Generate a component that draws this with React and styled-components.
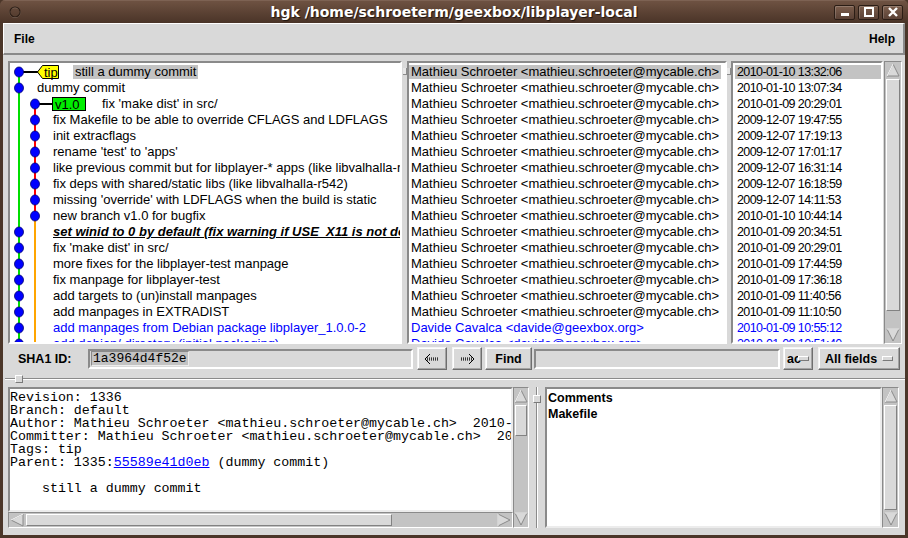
import React from 'react'
import styled, { createGlobalStyle } from 'styled-components'

const UI = '"Liberation Sans", Arial, Helvetica, sans-serif'
const MONO = '"Liberation Mono", "Courier New", monospace'

const GlobalStyle = createGlobalStyle`
  html, body {
    margin: 0;
    padding: 0;
    background: #4b3629;
  }
  body {
    width: 908px;
    height: 538px;
    overflow: hidden;
    font-family: ${UI};
  }
`

const commits = [
  { text: 'still a dummy commit', sel: true },
  { text: 'dummy commit' },
  { text: "fix 'make dist' in src/" },
  { text: 'fix Makefile to be able to override CFLAGS and LDFLAGS' },
  { text: 'init extracflags' },
  { text: "rename 'test' to 'apps'" },
  { text: 'like previous commit but for libplayer-* apps (like libvalhalla-r542)' },
  { text: 'fix deps with shared/static libs (like libvalhalla-r542)' },
  { text: "missing 'override' with LDFLAGS when the build is static" },
  { text: 'new branch v1.0 for bugfix' },
  { text: 'set winid to 0 by default (fix warning if USE_X11 is not defined)', emph: true },
  { text: "fix 'make dist' in src/" },
  { text: 'more fixes for the libplayer-test manpage' },
  { text: 'fix manpage for libplayer-test' },
  { text: 'add targets to (un)install manpages' },
  { text: 'add manpages in EXTRADIST' },
  { text: 'add manpages from Debian package libplayer_1.0.0-2', blue: true },
  { text: 'add debian/ directory (initial packaging)', blue: true },
]

const MATHIEU = 'Mathieu Schroeter <mathieu.schroeter@mycable.ch>'
const DAVIDE = 'Davide Cavalca <davide@geexbox.org>'

const dates = [
  '2010-01-10 13:32:06',
  '2010-01-10 13:07:34',
  '2010-01-09 20:29:01',
  '2009-12-07 19:47:55',
  '2009-12-07 17:19:13',
  '2009-12-07 17:01:17',
  '2009-12-07 16:31:14',
  '2009-12-07 16:18:59',
  '2009-12-07 14:11:53',
  '2010-01-10 10:44:14',
  '2010-01-09 20:34:51',
  '2010-01-09 20:29:01',
  '2010-01-09 17:44:59',
  '2010-01-09 17:36:18',
  '2010-01-09 11:40:56',
  '2010-01-09 11:10:50',
  '2010-01-09 10:55:12',
  '2010-01-09 10:51:40',
]

const GREEN_X = 9
const SIDE_X = 25

// graph cell for one row of the history list
const GraphCell = ({ i }) => {
  const width = i === 0 ? 63 : i === 1 ? 25 : i === 2 ? 90 : 41
  const dotX = i < 2 || i >= 10 ? GREEN_X : SIDE_X
  return (
    <GraphSvg width={width} height={16}>
      <line x1={GREEN_X} y1={i === 0 ? 8 : 0} x2={GREEN_X} y2={16} stroke="#00dd00" strokeWidth="2" />
      {i === 2 && <line x1={SIDE_X} y1={8} x2={SIDE_X} y2={16} stroke="#ff0000" strokeWidth="2" />}
      {i > 2 && i < 9 && <line x1={SIDE_X} y1={0} x2={SIDE_X} y2={16} stroke="#ff0000" strokeWidth="2" />}
      {i === 9 && (
        <>
          <line x1={SIDE_X} y1={0} x2={SIDE_X} y2={8} stroke="#ff0000" strokeWidth="2" />
          <line x1={SIDE_X} y1={8} x2={SIDE_X} y2={16} stroke="#ffa500" strokeWidth="2" />
        </>
      )}
      {i >= 10 && <line x1={SIDE_X} y1={0} x2={SIDE_X} y2={16} stroke="#ffa500" strokeWidth="2" />}
      {i === 0 && (
        <>
          <line x1={GREEN_X} y1={8} x2={28} y2={8} stroke="#000" strokeWidth="2" />
          <polygon points="27.5,8 32.5,1.5 48.5,1.5 48.5,14.5 32.5,14.5" fill="#ffff00" stroke="#000" />
          <text x="34" y="12.5" fontFamily={UI} fontSize="13" fill="#000">tip</text>
        </>
      )}
      {i === 2 && (
        <>
          <line x1={SIDE_X} y1={8} x2={42} y2={8} stroke="#000" strokeWidth="2" />
          <rect x="42.5" y="1.5" width="33" height="13" fill="#00ee00" stroke="#000" />
          <text x="45" y="12.5" fontFamily={UI} fontSize="13" fill="#000">v1.0</text>
        </>
      )}
      <ellipse cx={dotX} cy={8} rx="4.5" ry="5" fill="#0000ff" stroke="#000070" strokeWidth="0.8" />
    </GraphSvg>
  )
}

const ScrollArrow = ({ dir }) => {
  const pts = {
    up: ['8,2 14,14 2,14', '2,14 8,2'],
    down: ['2,2 14,2 8,14', '2,2 14,2'],
    left: ['2,8 14,2 14,14', '14,2 2,8'],
    right: ['2,2 14,8 2,14', '2,14 2,2'],
  }[dir]
  return (
    <ArrowSvg width="16" height="16" viewBox="0 0 16 16">
      <polygon points={pts[0]} fill="#d9d9d9" stroke="#8a8a8a" strokeWidth="1" />
      <polyline points={pts[1]} fill="none" stroke="#ffffff" strokeWidth="1" />
    </ArrowSvg>
  )
}

const Scrollbar = ({ vertical, before, size, after }) => (
  <Track $vertical={vertical}>
    <ScrollArrow dir={vertical ? 'up' : 'left'} />
    <Trough $vertical={vertical}>
      <div style={{ flex: before }} />
      <Thumb style={{ flex: size }} />
      <div style={{ flex: after }} />
    </Trough>
    <ScrollArrow dir={vertical ? 'down' : 'right'} />
  </Track>
)

const NavArrow = ({ back }) => (
  <svg width="18" height="12" viewBox="0 0 18 12">
    <g transform={back ? '' : 'translate(18,0) scale(-1,1)'}>
      <polyline points="7,1 2,6 7,11" fill="none" stroke="#000" strokeWidth="1" />
      <line x1="4" y1="5" x2="16" y2="5" stroke="#000" strokeDasharray="1 1" />
      <line x1="3" y1="6" x2="16" y2="6" stroke="#000" strokeDasharray="1 1" strokeDashoffset="1" />
      <line x1="4" y1="7" x2="16" y2="7" stroke="#000" strokeDasharray="1 1" />
    </g>
  </svg>
)

const detail = [
  'Revision: 1336',
  'Branch: default',
  'Author: Mathieu Schroeter <mathieu.schroeter@mycable.ch>  2010-01-10 13:32:06',
  'Committer: Mathieu Schroeter <mathieu.schroeter@mycable.ch>  2010-01-10 13:32:06',
  'Tags: tip',
]

export default function App() {
  return (
    <>
      <GlobalStyle />
      <Window>
        <TitleBar>
          <TitleLeft>
            <svg width="16" height="16" viewBox="0 0 16 16">
              <circle cx="8" cy="8.6" r="5" fill="none" stroke="#8f7a6d" strokeWidth="1" />
              <circle cx="8" cy="8" r="5" fill="none" stroke="#2c1e16" strokeWidth="1.2" />
            </svg>
          </TitleLeft>
          <TitleText>hgk /home/schroeterm/geexbox/libplayer-local</TitleText>
          <TitleRight>
            <WinButton>
              <svg width="12" height="10"><rect x="2" y="6" width="8" height="3" fill="#fff" /></svg>
            </WinButton>
            <WinButton>
              <svg width="12" height="10"><rect x="2" y="1" width="8" height="8" fill="none" stroke="#fff" strokeWidth="2" /></svg>
            </WinButton>
            <WinButton>
              <svg width="12" height="10">
                <path d="M2 1 L10 9 M10 1 L2 9" stroke="#fff" strokeWidth="2.4" />
              </svg>
            </WinButton>
          </TitleRight>
        </TitleBar>

        <Body>
          <MenuBar>
            <MenuItem>File</MenuItem>
            <MenuItem>Help</MenuItem>
          </MenuBar>

          <TopPanes>
            <ListBox $w={394}>
              {commits.map((c, i) => (
                <ListRow key={i}>
                  <GraphCell i={i} />
                  <Cell $sel={c.sel} $blue={c.blue} $emph={c.emph}>{c.text}</Cell>
                </ListRow>
              ))}
            </ListBox>
            <VSash $w={5}><SashGrip /></VSash>
            <ListBox $w={320}>
              {commits.map((c, i) => (
                <ListRow key={i}>
                  <Cell $sel={i === 0} $blue={c.blue}>{c.blue ? DAVIDE : MATHIEU}</Cell>
                </ListRow>
              ))}
            </ListBox>
            <VSash $w={4}><SashGrip /></VSash>
            <ListBox $w={152}>
              {dates.map((d, i) => (
                <ListRow key={i}>
                  <DateCell $sel={i === 0} $blue={commits[i].blue}>{d}</DateCell>
                </ListRow>
              ))}
            </ListBox>
            <ScrollSlot $w={18} $h={283} $ml={1}>
              <Scrollbar vertical before={0} size={94} after={6} />
            </ScrollSlot>
          </TopPanes>

          <FindRow>
            <FieldLabel>SHA1 ID:</FieldLabel>
            <Entry $w={325}>
              <Selected>1a3964d4f52e</Selected>
            </Entry>
            <Button $w={30} $ml={4}><NavArrow back /></Button>
            <Button $w={30} $ml={5}><NavArrow /></Button>
            <Button $w={47} $ml={3}>Find</Button>
            <Entry $w={246} $ml={2} />
            <Button $w={30} $ml={3}>
              ac<Indicator $overlap />
            </Button>
            <Button $w={82} $ml={5} $between>
              All fields<Indicator />
            </Button>
          </FindRow>

          <HSash>
            <HSashGrip />
          </HSash>

          <BottomPanes>
            <DetailGroup>
              <TextBox $mono $area="1 / 1 / 2 / 2">
                {detail.map((line, i) => (
                  <TextLine key={i}>{line}</TextLine>
                ))}
                <TextLine>
                  Parent: 1335:<Link>55589e41d0eb</Link> (dummy commit)
                </TextLine>
                <TextLine> </TextLine>
                <TextLine>{'    still a dummy commit'}</TextLine>
              </TextBox>
              <ScrollSlot $w={16} $h={141} $area="1 / 2 / 3 / 3">
                <Scrollbar vertical before={0} size={28} after={72} />
              </ScrollSlot>
              <ScrollSlot $w={505} $h={16} $area="2 / 1 / 3 / 2">
                <Scrollbar before={0} size={78} after={22} />
              </ScrollSlot>
            </DetailGroup>
            <PaneSash>
              <PaneSashGrip />
            </PaneSash>
            <TextBox $w={337}>
              <FileLine>Comments</FileLine>
              <FileLine>Makefile</FileLine>
            </TextBox>
            <ScrollSlot $w={17} $h={141}>
              <Scrollbar vertical before={0} size={100} after={0} />
            </ScrollSlot>
          </BottomPanes>
        </Body>
      </Window>
    </>
  )
}

const Window = styled.div`
  width: 908px;
  height: 538px;
  box-sizing: border-box;
  display: flex;
  flex-direction: column;
  background: #4b3629;
  border-radius: 5px 5px 0 0;
  overflow: hidden;
`

const TitleBar = styled.div`
  height: 23px;
  flex-shrink: 0;
  display: grid;
  grid-template-columns: 1fr auto 1fr;
  align-items: center;
  background: linear-gradient(#6e5242, #5a4133 55%, #4a3428);
  border-top: 1px solid #7d6253;
  box-sizing: border-box;
`

const TitleLeft = styled.div`
  padding-left: 7px;
  display: flex;
  align-items: center;
`

const TitleText = styled.div`
  font-family: "DejaVu Sans", "Liberation Sans", sans-serif;
  font-weight: bold;
  font-size: 14px;
  color: #fff;
  text-shadow: 1px 1px 1px #1e140e;
  white-space: nowrap;
`

const TitleRight = styled.div`
  display: flex;
  justify-content: flex-end;
  gap: 3px;
  padding-right: 5px;
`

const WinButton = styled.div`
  width: 21px;
  height: 15px;
  box-sizing: border-box;
  border: 1px solid #2b1d15;
  border-radius: 2px;
  background: linear-gradient(#7c5e4d, #5a4135);
  box-shadow: inset 1px 1px 0 rgba(255, 255, 255, 0.18);
  display: flex;
  align-items: center;
  justify-content: center;
`

const Body = styled.div`
  flex: 1;
  margin: 0 3px 3px 3px;
  background: #d9d9d9;
  display: flex;
  flex-direction: column;
  min-height: 0;
`

const MenuBar = styled.div`
  height: 32px;
  flex-shrink: 0;
  box-sizing: border-box;
  display: flex;
  align-items: center;
  justify-content: space-between;
  padding: 0 8px 0 10px;
  border-style: solid;
  border-width: 1px 2px 2px 1px;
  border-color: #ffffff #8a8a8a #8a8a8a #ffffff;
`

const MenuItem = styled.span`
  font-family: ${UI};
  font-weight: bold;
  font-size: 12px;
  color: #000;
`

const TopPanes = styled.div`
  display: flex;
  height: 283px;
  flex-shrink: 0;
  margin: 6px 2px 0 5px;
`

const ListBox = styled.div`
  width: ${p => p.$w}px;
  flex-shrink: 0;
  box-sizing: border-box;
  background: #ffffff;
  border: 2px solid;
  border-color: #8a8a8a #ffffff #ffffff #8a8a8a;
  padding-top: 1px;
  overflow: hidden;
`

const ListRow = styled.div`
  height: 16px;
  display: flex;
  align-items: center;
  white-space: nowrap;
  font-family: ${UI};
  font-size: 13px;
  color: #000;
`

const GraphSvg = styled.svg`
  display: block;
  flex-shrink: 0;
`

const Cell = styled.span`
  display: inline-block;
  line-height: 14px;
  padding: 0 2px;
  background: ${p => (p.$sel ? '#c3c3c3' : 'transparent')};
  color: ${p => (p.$blue ? '#0000ff' : '#000')};
  font-weight: ${p => (p.$emph ? 'bold' : 'normal')};
  font-style: ${p => (p.$emph ? 'italic' : 'normal')};
  text-decoration: ${p => (p.$emph ? 'underline' : 'none')};
`

const DateCell = styled.span`
  flex: 1;
  display: block;
  line-height: 14px;
  margin-left: 2px;
  padding-left: 2px;
  font-size: 12.5px;
  letter-spacing: -0.6px;
  background: ${p => (p.$sel ? '#c3c3c3' : 'transparent')};
  color: ${p => (p.$blue ? '#0000ff' : '#000')};
`

const VSash = styled.div`
  width: ${p => p.$w}px;
  flex-shrink: 0;
  display: flex;
  justify-content: center;
  padding-top: 7px;
  box-sizing: border-box;
`

const SashGrip = styled.div`
  width: 3px;
  height: 6px;
  background: #e8e8e8;
  border-right: 1px solid #8a8a8a;
  border-bottom: 1px solid #8a8a8a;
`

const ScrollSlot = styled.div`
  width: ${p => p.$w}px;
  height: ${p => p.$h}px;
  flex-shrink: 0;
  margin-left: ${p => p.$ml || 0}px;
  grid-area: ${p => p.$area || 'auto'};
  display: flex;
`

const Track = styled.div`
  flex: 1;
  display: flex;
  flex-direction: ${p => (p.$vertical ? 'column' : 'row')};
  align-items: center;
  box-sizing: border-box;
  background: #c3c3c3;
  border: 1px solid;
  border-color: #8a8a8a #ffffff #ffffff #8a8a8a;
  overflow: hidden;
`

const ArrowSvg = styled.svg`
  display: block;
  flex-shrink: 0;
`

const Trough = styled.div`
  flex: 1;
  align-self: stretch;
  display: flex;
  flex-direction: ${p => (p.$vertical ? 'column' : 'row')};
  padding: 1px;
`

const Thumb = styled.div`
  box-sizing: border-box;
  background: #d9d9d9;
  border: 1px solid;
  border-color: #ffffff #828282 #828282 #ffffff;
`

const FindRow = styled.div`
  height: 25px;
  flex-shrink: 0;
  margin-top: 2px;
  display: flex;
  align-items: center;
  padding-left: 15px;
`

const FieldLabel = styled.span`
  width: 70px;
  flex-shrink: 0;
  font-family: ${UI};
  font-weight: bold;
  font-size: 12.5px;
`

const Entry = styled.div`
  width: ${p => p.$w}px;
  height: 20px;
  margin-left: ${p => p.$ml || 0}px;
  flex-shrink: 0;
  box-sizing: border-box;
  border: 2px solid;
  border-color: #8a8a8a #ffffff #ffffff #8a8a8a;
  background: #d9d9d9;
  display: flex;
  align-items: center;
  padding-left: 1px;
`

const Selected = styled.span`
  font-family: ${MONO};
  font-size: 13px;
  line-height: 13px;
  padding: 0 1px;
  background: #c3c3c3;
  border: 1px solid;
  border-color: #8a8a8a #ececec #ececec #8a8a8a;
`

const Button = styled.div`
  width: ${p => p.$w}px;
  height: 23px;
  margin-left: ${p => p.$ml || 0}px;
  flex-shrink: 0;
  box-sizing: border-box;
  border: 1px solid;
  border-color: #f4f4f4 #6e6e6e #6e6e6e #f4f4f4;
  box-shadow: inset -1px -1px 0 #a3a3a3, inset 1px 1px 0 #ffffff;
  display: flex;
  align-items: center;
  justify-content: ${p => (p.$between ? 'space-between' : 'center')};
  padding: ${p => (p.$between ? '0 6px 0 6px' : '0')};
  font-family: ${UI};
  font-weight: bold;
  font-size: 12.5px;
  color: #000;
  white-space: nowrap;
  overflow: hidden;
`

const Indicator = styled.span`
  width: 9px;
  height: 3px;
  margin-left: ${p => (p.$overlap ? -3 : 0)}px;
  background: #d9d9d9;
  border: 1px solid;
  border-color: #ffffff #7a7a7a #7a7a7a #ffffff;
`

const HSash = styled.div`
  height: 15px;
  flex-shrink: 0;
  display: flex;
  align-items: center;
  padding-left: 10px;
  margin-left: 2px;
  background: linear-gradient(#8a8a8a, #8a8a8a) 0 7px / 100% 1px no-repeat,
    linear-gradient(#ffffff, #ffffff) 0 8px / 100% 1px no-repeat;
`

const HSashGrip = styled.div`
  width: 6px;
  height: 6px;
  background: #d9d9d9;
  border: 1px solid;
  border-color: #ffffff #7a7a7a #7a7a7a #ffffff;
`

const BottomPanes = styled.div`
  display: flex;
  height: 141px;
  flex-shrink: 0;
  margin: 1px 0 0 5px;
`

const DetailGroup = styled.div`
  display: grid;
  grid-template-columns: 505px 16px;
  grid-template-rows: 125px 16px;
`

const TextBox = styled.div`
  width: ${p => (p.$w ? `${p.$w}px` : 'auto')};
  grid-area: ${p => p.$area || 'auto'};
  flex-shrink: 0;
  box-sizing: border-box;
  background: #ffffff;
  border: 2px solid;
  border-color: #8a8a8a #ececec #ececec #8a8a8a;
  padding: ${p => (p.$mono ? '2px 0 0 0' : '1px 0 0 1px')};
  overflow: hidden;
`

const TextLine = styled.div`
  font-family: ${MONO};
  font-size: 13.3px;
  line-height: 13px;
  height: 13px;
  white-space: pre;
  color: #000;
`

const Link = styled.span`
  color: #0000ff;
  text-decoration: underline;
`

const FileLine = styled.div`
  font-family: ${UI};
  font-weight: bold;
  font-size: 12.5px;
  line-height: 16px;
  color: #000;
`

const PaneSash = styled.div`
  width: 16px;
  flex-shrink: 0;
  display: flex;
  justify-content: center;
  padding-top: 8px;
  box-sizing: border-box;
  background: linear-gradient(#8a8a8a, #8a8a8a) 7px 0 / 1px 100% no-repeat,
    linear-gradient(#ffffff, #ffffff) 8px 0 / 1px 100% no-repeat;
`

const PaneSashGrip = styled.div`
  width: 6px;
  height: 6px;
  background: #d9d9d9;
  border: 1px solid;
  border-color: #ffffff #7a7a7a #7a7a7a #ffffff;
`
